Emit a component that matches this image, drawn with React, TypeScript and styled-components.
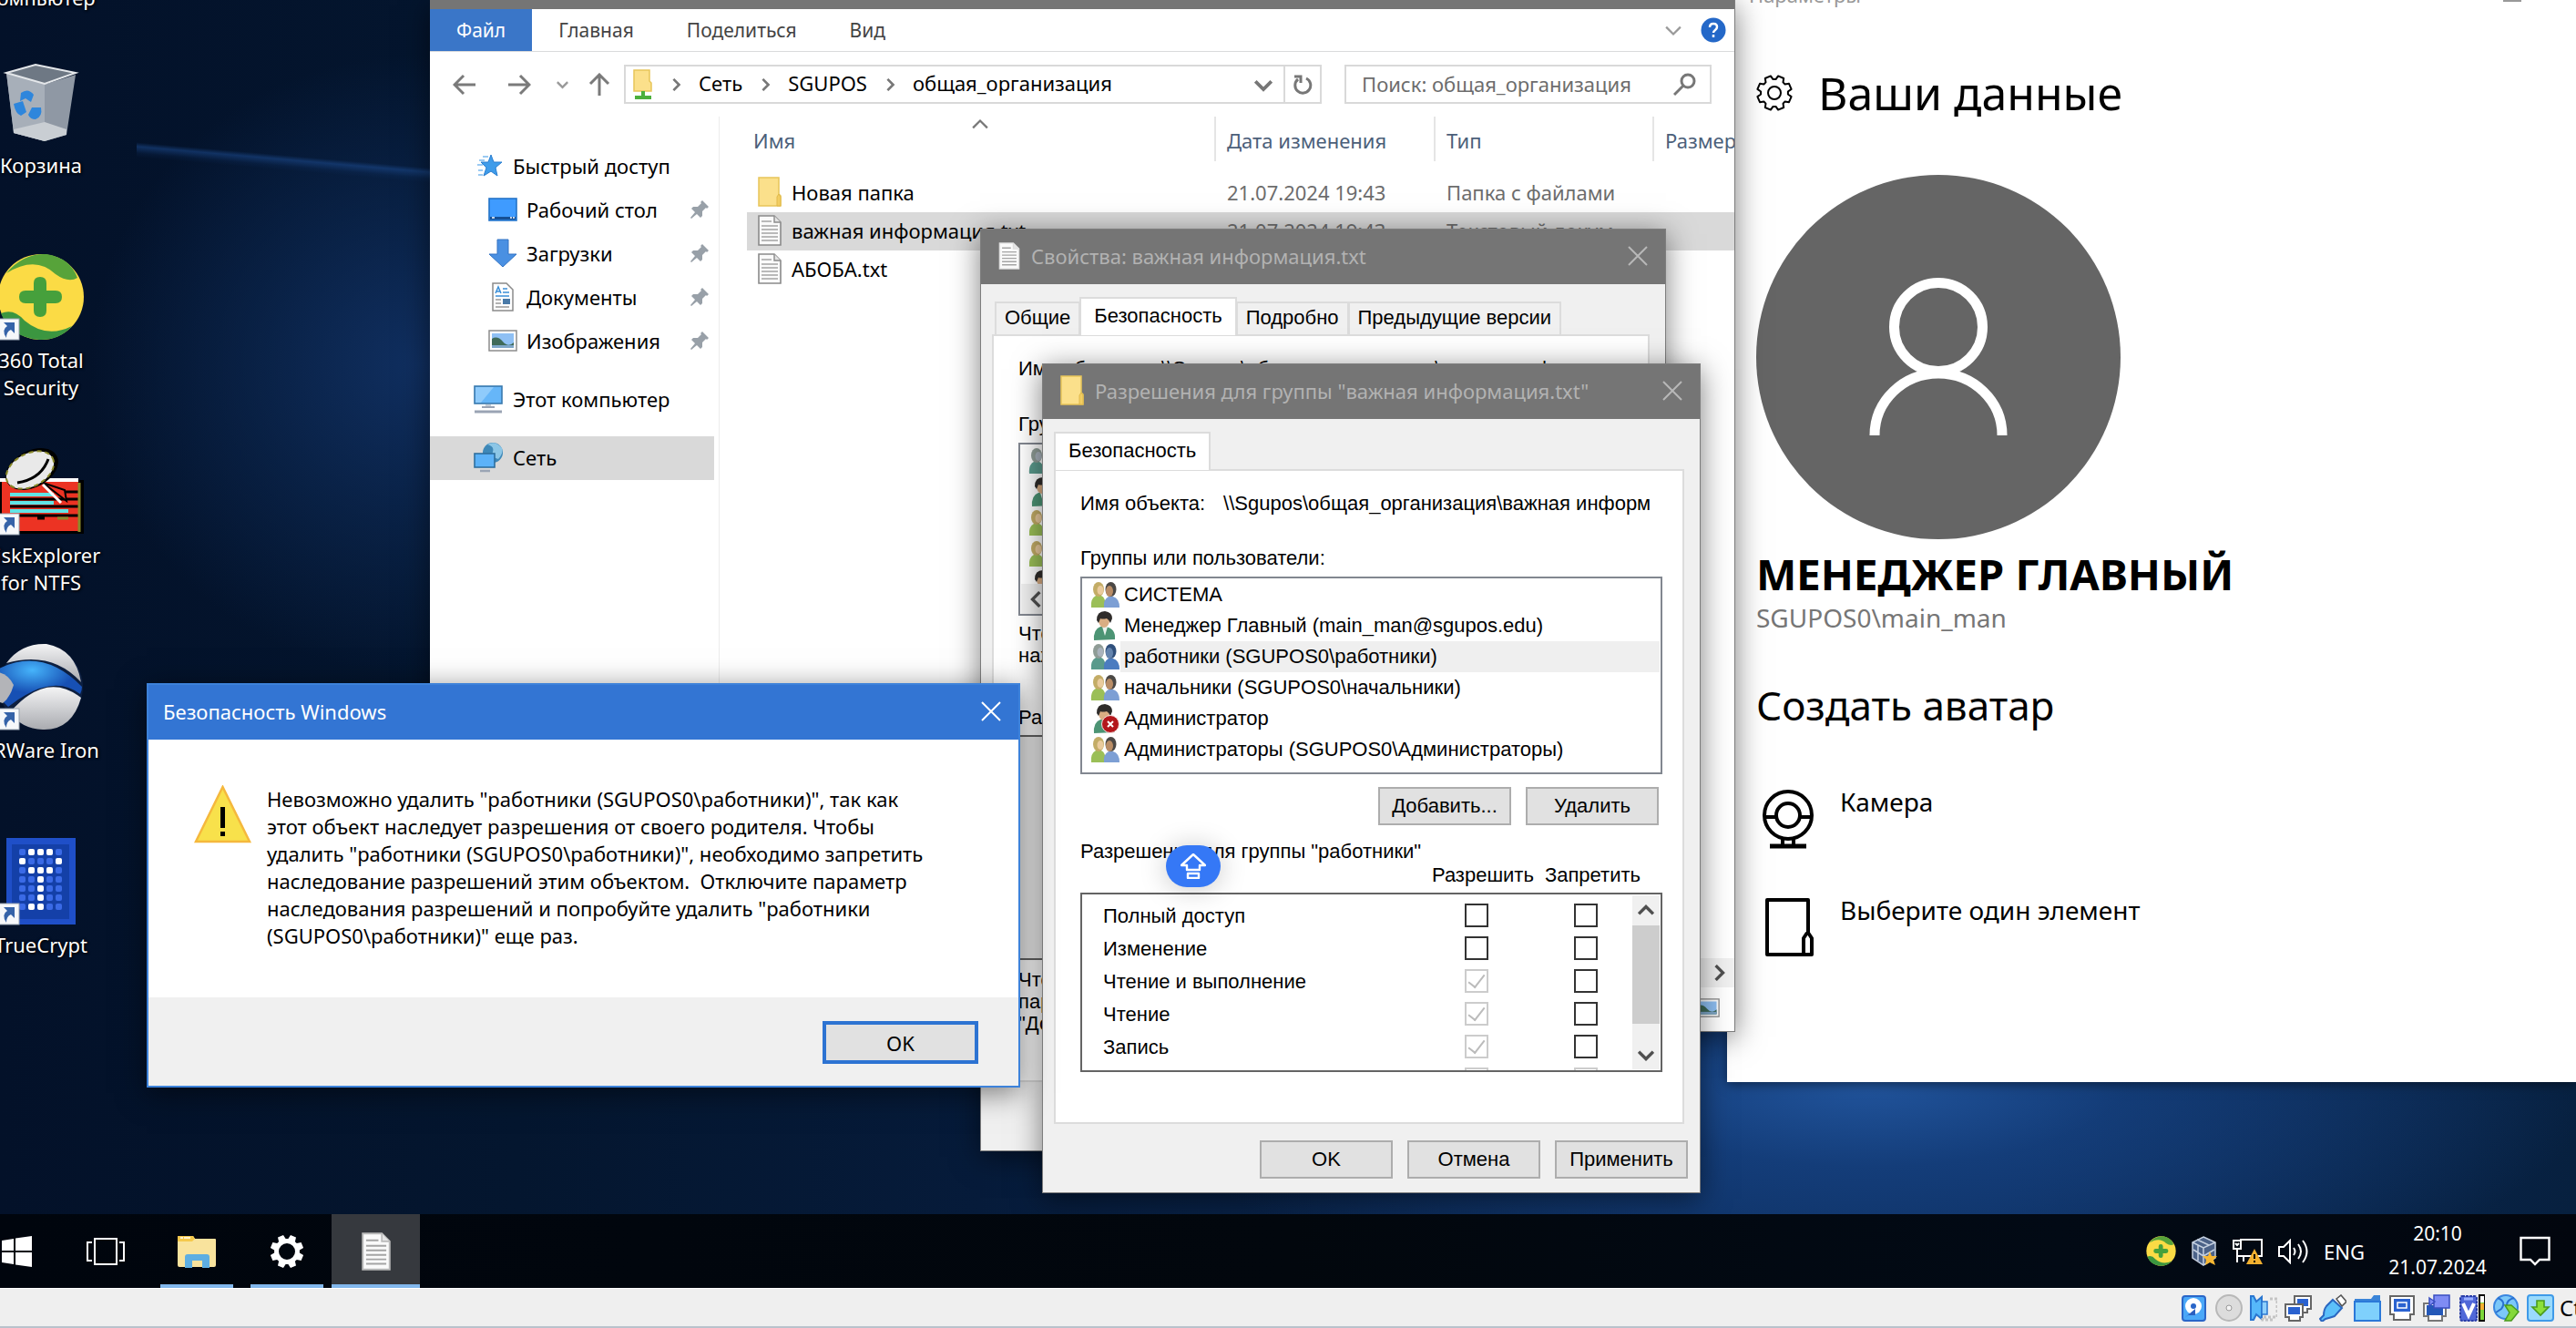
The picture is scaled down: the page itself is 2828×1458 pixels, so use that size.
import React from "react";
import styled, { createGlobalStyle, css } from "styled-components";

const ui = `"Noto Sans", "Open Sans", sans-serif`;
const dlg = `"Liberation Sans", Arial, sans-serif`;

const GlobalStyle = createGlobalStyle`
  * { box-sizing: border-box; }
  body { margin: 0; background: #efefef; font-family: ${ui}; font-size: 22px; color: #000; }
  button, input { font: inherit; color: inherit; }
  h1, h2, p, ul { margin: 0; padding: 0; font: inherit; }
  ul { list-style: none; }
  svg { display: block; flex: none; }
`;

/* ---------- shell ---------- */

const Screen = styled.div`
  display: flex;
  flex-direction: column;
  height: 100vh;
  overflow: hidden;
`;

const Desktop = styled.main`
  position: relative;
  flex: 1;
  overflow: hidden;
  background:
    linear-gradient(185deg, transparent 46%, rgba(28, 74, 142, 0.55) 50%, rgba(20, 60, 120, 0.15) 56%, transparent 60%) 150px 130px / 322px 90px no-repeat,
    radial-gradient(ellipse 800px 260px at 2050px 1190px, #21549c 0%, rgba(24, 70, 138, 0.65) 35%, transparent 100%),
    radial-gradient(ellipse 360px 340px at 460px 400px, #102f60 0%, rgba(13, 42, 86, 0.6) 50%, transparent 100%),
    linear-gradient(90deg, #031129 0%, #04162f 20%, #061b3a 38%, #0c2c5a 66%, #0c2c5a 78%, #07203f 100%);
`;

const IconColumn = styled.ul`
  position: absolute;
  left: -30px;
  top: -150px;
  width: 150px;
`;

const Shortcut = styled.li`
  height: 214px;
  display: flex;
  flex-direction: column;
  align-items: center;
  gap: 6px;
  color: #fff;
  line-height: 30px;
  text-align: center;
  white-space: pre;
  text-shadow: 1px 1px 3px #000, 0 0 3px #000;
`;

/* ---------- windows ---------- */

const Window = styled.section<{ $x: number; $y: number; $w: number; $active?: boolean }>`
  position: absolute;
  left: ${(p) => p.$x}px;
  top: ${(p) => p.$y}px;
  width: ${(p) => p.$w}px;
  border: ${(p) => (p.$active ? "2px solid #3d82da" : "1px solid #7d7d7d")};
  background: #f0f0f0;
  box-shadow: 0 6px 30px rgba(0, 0, 0, 0.5);
`;

const TitleBar = styled.header<{ $active?: boolean }>`
  display: flex;
  align-items: center;
  height: 60px;
  padding: 0 18px 2px ${(p) => (p.$active ? 16 : 19)}px;
  gap: 12px;
  background: ${(p) => (p.$active ? "#3375d3" : "#757575")};
  color: ${(p) => (p.$active ? "#fff" : "#b2b2b2")};
`;

const Title = styled.h2`
  flex: 1;
  white-space: nowrap;
`;

const IconButton = styled.button<{ $w?: number; $h?: number }>`
  display: flex;
  align-items: center;
  justify-content: center;
  width: ${(p) => p.$w ?? 24}px;
  height: ${(p) => p.$h ?? 24}px;
  padding: 0;
  border: 0;
  background: none;
`;

const PushButton = styled.button<{ $primary?: boolean }>`
  width: ${(p) => (p.$primary ? 171 : 146)}px;
  height: ${(p) => (p.$primary ? 47 : 42)}px;
  padding: 0;
  border: ${(p) => (p.$primary ? "4px solid #2d73d2" : "2px solid #adadad")};
  background: #e1e1e1;
`;

/* ---------- explorer ---------- */

const Explorer = styled(Window)`
  height: 1133px;
  display: flex;
  flex-direction: column;
  border-top: 0;
  border-left: 0;
  background: #fff;
  overflow: hidden;
`;

const Caption = styled.div`
  height: 10px;
  background: #757575;
`;

const Ribbon = styled.nav`
  display: flex;
  align-items: center;
  height: 47px;
  border-bottom: 1px solid #dadbdc;
  padding-right: 8px;
  font-size: 21px;
`;

const RibbonTab = styled.button<{ $file?: boolean }>`
  height: 46px;
  padding: 0 29px;
  border: 0;
  background: ${(p) => (p.$file ? "#3a76c8" : "none")};
  color: ${(p) => (p.$file ? "#fff" : "#444")};
`;

const Spacer = styled.span`
  flex: 1;
`;

const NavRow = styled.div`
  display: flex;
  align-items: center;
  padding: 14px 25px 14px 8px;
`;

const AddressBar = styled.div`
  flex: 1;
  display: flex;
  align-items: center;
  height: 43px;
  margin: 0 25px 0 3px;
  border: 2px solid #d9d9d9;
  padding-left: 8px;
  gap: 18px;
`;

const Crumb = styled.button`
  border: 0;
  padding: 0 0 4px;
  background: none;
`;

const RefreshCell = styled.div`
  border-left: 2px solid #d9d9d9;
  height: 39px;
  display: flex;
  align-items: center;
  margin-left: -8px;
`;

const SearchBox = styled.label`
  display: flex;
  align-items: center;
  width: 403px;
  height: 43px;
  border: 2px solid #d9d9d9;
  padding: 0 14px 0 17px;
  gap: 8px;
`;

const SearchInput = styled.input`
  flex: 1;
  min-width: 0;
  border: 0;
  padding: 0 0 2px;
  outline: 0;
  background: none;
  &::placeholder { color: #6d6d6d; opacity: 1; }
`;

const Split = styled.div`
  flex: 1;
  display: grid;
  grid-template-columns: 318px 1fr;
  min-height: 0;
`;

const Sidebar = styled.nav`
  border-right: 1px solid #ececec;
  padding: 31px 5px 0 0;
  display: flex;
  flex-direction: column;
  gap: 16px;
`;

const SideItem = styled.a<{ $child?: boolean; $current?: boolean }>`
  display: flex;
  align-items: center;
  height: 48px;
  padding: 0 5px 2px ${(p) => (p.$child ? 64 : 48)}px;
  gap: ${(p) => (p.$child ? 10 : 11)}px;
  color: #000;
  text-decoration: none;
  white-space: nowrap;
  background: ${(p) => (p.$current ? "#d9d9d9" : "none")};
`;

const Listing = styled.div`
  padding-left: 30px;
  overflow: hidden;
`;

const FileTable = styled.table`
  width: 100%;
  table-layout: fixed;
  border-collapse: collapse;
  white-space: nowrap;
  td, th { padding: 0; text-align: left; font-weight: normal; }
  td { height: 42px; padding: 0 0 2px 14px; color: #6d6d6d; overflow: hidden; }
`;

const HeadCell = styled.div<{ $first?: boolean }>`
  position: relative;
  display: flex;
  align-items: center;
  height: 49px;
  margin-bottom: 14px;
  padding: 2px 0 0 ${(p) => (p.$first ? 7 : 12)}px;
  border-left: ${(p) => (p.$first ? "0" : "2px solid #e5e5e5")};
  color: #4c607a;
  svg { position: absolute; left: 247px; top: 0; }
`;

const FileRow = styled.tr<{ $selected?: boolean }>`
  background: ${(p) => (p.$selected ? "#d9d9d9" : "none")};
`;

const FileName = styled.div`
  display: flex;
  align-items: center;
  gap: 11px;
  margin-left: -2px;
  color: #000;
`;

const ScrollTrack = styled.div`
  display: flex;
  justify-content: flex-end;
  height: 32px;
  background: #f0f0f0;
  padding-right: 1px;
`;

const StatusRow = styled.div`
  display: flex;
  align-items: center;
  justify-content: flex-end;
  height: 48px;
  padding: 0 16px 4px 0;
`;

/* ---------- property dialogs ---------- */

const DialogBody = styled.div`
  padding: 14px 13px 15px 12px;
  font-family: ${dlg};
  font-size: 22px;
  line-height: 24px;
`;

const Tabs = styled.div<{ $inset?: boolean }>`
  display: flex;
  align-items: flex-end;
  height: 41px;
  padding-left: ${(p) => (p.$inset ? 3 : 0)}px;
`;

const Tab = styled.button<{ $active?: boolean }>`
  height: ${(p) => (p.$active ? 42 : 36)}px;
  margin-bottom: ${(p) => (p.$active ? -1 : 0)}px;
  padding: 0 ${(p) => (p.$active ? 14 : 9)}px 2px;
  border: 2px solid #dcdcdc;
  border-bottom: 0;
  margin-right: -1px;
  position: relative;
  z-index: ${(p) => (p.$active ? 1 : 0)};
  background: ${(p) => (p.$active ? "#fff" : "#f0f0f0")};
  white-space: nowrap;
`;

const Panel = styled.div<{ $end: number }>`
  margin-right: 4px;
  padding: 24px 22px ${(p) => p.$end}px 27px;
  border: 2px solid #dcdcdc;
  background: #fff;
`;

const ObjectName = styled.div`
  display: flex;
  gap: 20px;
  white-space: nowrap;
  overflow: hidden;
`;

const Label = styled.p<{ $top: number }>`
  margin-top: ${(p) => p.$top}px;
  white-space: pre;
`;

const Principals = styled.ul<{ $h: number }>`
  height: ${(p) => p.$h}px;
  margin-top: 8px;
  padding: 1px 1px 0;
  border: 2px solid #828790;
  background: #fff;
  display: flex;
  flex-direction: column;
  overflow: hidden;
`;

const Principal = styled.li<{ $selected?: boolean }>`
  display: flex;
  align-items: center;
  flex: none;
  height: 34px;
  padding-left: 8px;
  gap: 1px;
  span {
    flex: 1;
    padding-left: 4px;
    line-height: 34px;
    white-space: nowrap;
    background: ${(p) => (p.$selected ? "#efefef" : "none")};
  }
`;

const BottomScroll = styled.li`
  position: relative;
  flex: none;
  height: 33px;
  margin-top: -18px;
  display: flex;
  align-items: center;
  background: #f0f0f0;
`;

const Buttons = styled.div<{ $top: number; $end?: number }>`
  display: flex;
  justify-content: flex-end;
  gap: 16px;
  margin: ${(p) => p.$top}px ${(p) => p.$end ?? 0}px 0 0;
`;

const RightsHead = styled.div`
  display: flex;
  justify-content: flex-end;
  gap: 12px;
  padding-right: 24px;
  margin-top: 2px;
`;

const RightsBox = styled.div<{ $h: number; $disabled?: boolean }>`
  display: flex;
  height: ${(p) => p.$h}px;
  margin-top: 7px;
  border: 2px solid #646464;
  background: ${(p) => (p.$disabled ? "#f0f0f0" : "#fff")};
  overflow: hidden;
`;

const RightsTable = styled.table`
  flex: 1;
  align-self: flex-start;
  margin-top: 5px;
  table-layout: fixed;
  border-collapse: collapse;
  td, th { height: 36px; padding: 0; text-align: left; font-weight: normal; }
  th { padding: 1px 0 0 23px; }
`;

const Check = styled.input`
  appearance: none;
  display: block;
  width: 26px;
  height: 26px;
  margin: 5px 0;
  border: 2px solid #333;
  background: #fff;
  &:disabled { border-color: #ccc; }
  &:checked::after {
    content: "";
    display: block;
    width: 8px;
    height: 16px;
    margin: 0 auto;
    border: solid #bbb;
    border-width: 0 2px 2px 0;
    transform: rotate(38deg);
  }
`;

const VScroll = styled.div`
  width: 30px;
  margin: 1px;
  display: flex;
  flex-direction: column;
  background: #f0f0f0;
`;

const Thumb = styled.div`
  height: 108px;
  background: #cdcdcd;
`;

const KeyHint = styled.div`
  position: absolute;
  left: 1280px;
  top: 928px;
  width: 60px;
  height: 46px;
  border-radius: 23px;
  display: flex;
  align-items: center;
  justify-content: center;
  background: #3578f6;
  box-shadow: 0 2px 30px rgba(0, 0, 0, 0.22);
`;

/* ---------- message ---------- */

const MessageBody = styled.div`
  display: flex;
  align-items: flex-start;
  gap: 17px;
  padding: 50px 40px 53px 50px;
  background: #fff;
  line-height: 30px;
  white-space: pre;
`;

const MessageFooter = styled.footer`
  display: flex;
  justify-content: flex-end;
  padding: 26px 44px 24px;
`;

/* ---------- settings ---------- */

const Settings = styled.section`
  position: absolute;
  left: 1896px;
  right: 0;
  top: -26px;
  padding: 0 32px 84px;
  background: #fff;
  box-shadow: 0 2px 12px rgba(0, 0, 0, 0.5);
`;

const SettingsTitle = styled.header`
  display: flex;
  justify-content: space-between;
  align-items: center;
  margin: 0 28px 0 -8px;
  height: 40px;
  color: #999;
  svg { margin-top: -4px; }
`;

const PageHead = styled.h1`
  display: flex;
  align-items: center;
  gap: 28px;
  margin-top: 48px;
  height: 80px;
  font-size: 50px;
  white-space: nowrap;
`;

const Avatar = styled.div`
  display: flex;
  justify-content: center;
  width: 400px;
  height: 400px;
  margin-top: 50px;
  padding-top: 110px;
  border-radius: 50%;
  background: #656565;
`;

const UserName = styled.p`
  margin-top: 6px;
  font-size: 47px;
  line-height: 64px;
  font-weight: 700;
  white-space: nowrap;
`;

const Account = styled.p`
  font-size: 28px;
  line-height: 32px;
  color: #767676;
`;

const SubHead = styled.h2`
  margin-top: 48px;
  font-size: 44px;
  line-height: 64px;
`;

const Source = styled.button`
  display: flex;
  align-items: flex-start;
  gap: 28px;
  width: 100%;
  height: 119px;
  padding: 0 0 0 6px;
  border: 0;
  background: none;
  font-size: 28px;
  line-height: 28px;
  text-align: left;
`;

const Sources = styled.div`
  margin-top: 60px;
`;

/* ---------- taskbar ---------- */

const Taskbar = styled.footer`
  display: flex;
  height: 81px;
  flex: none;
  background: linear-gradient(90deg, #00050d, #02070d 50%, #020a15 80%, #02060e);
  color: #fff;
`;

const TaskButton = styled.button<{ $w: number; $active?: boolean; $line?: number; $start?: boolean }>`
  display: flex;
  align-items: center;
  justify-content: ${(p) => (p.$start ? "flex-start" : "center")};
  width: ${(p) => p.$w}px;
  padding: 0 0 0 ${(p) => (p.$start ? 2 : 0)}px;
  border: 0;
  background: ${(p) => (p.$active ? "#36393e" : "none")};
  ${(p) =>
    p.$line &&
    css`
      background-image: linear-gradient(#82b7ec, #82b7ec);
      background-size: ${p.$line}px 4px;
      background-position: center bottom;
      background-repeat: no-repeat;
    `}
`;

const Tray = styled.div`
  margin-left: auto;
  display: flex;
  align-items: center;
  padding-right: 28px;
`;

const TrayGroup = styled.div`
  display: flex;
  align-items: center;
  gap: 16px;
`;

const Clock = styled.time`
  width: 120px;
  margin: 0 30px 0 20px;
  padding-bottom: 2px;
  font-size: 21px;
  line-height: 37px;
  text-align: center;
`;

const HostBar = styled.div`
  display: flex;
  align-items: center;
  justify-content: flex-end;
  gap: 8px;
  height: 44px;
  flex: none;
  border-top: 1px solid #fff;
  border-bottom: 2px solid #b9c2cc;
  background: #efefef;
  overflow: hidden;
`;

const HostKey = styled.span`
  width: 18px;
  margin-left: -2px;
  font-size: 24px;
  white-space: nowrap;
  overflow: hidden;
`;

/* ---------- icons ---------- */

const Close = ({ c = "#b8b8b8" }: { c?: string }) => (
  <svg width="22" height="22" viewBox="0 0 22 22" stroke={c} strokeWidth="2" fill="none">
    <path d="M1 1l20 20M21 1L1 21" />
  </svg>
);

const Chevron = ({ d, w = 14, c = "#777", s = 3 }: { d: "up" | "down" | "left" | "right"; w?: number; c?: string; s?: number }) => {
  const p = { up: "M1 11l7-7 7 7", down: "M1 5l7 7 7-7", left: "M11 1L4 8l7 7", right: "M5 1l7 7-7 7" }[d];
  return (
    <svg width={w} height={w} viewBox="0 0 16 16" fill="none" stroke={c} strokeWidth={s}>
      <path d={p} />
    </svg>
  );
};

const Arrow = ({ r = 0 }: { r?: number }) => (
  <svg width="26" height="26" viewBox="0 0 26 26" fill="none" stroke="#7a7a7a" strokeWidth="3">
    <path transform={`rotate(${r} 13 13)`} d="M25 13H3M12 3L2 13l10 10" />
  </svg>
);

const Folder = () => (
  <svg width="26" height="34" viewBox="0 0 26 34">
    <path d="M1 1h22v18l2 2v11H1z" fill="#fbe08b" stroke="#e8c55a" strokeWidth="1.5" />
    <path d="M21 32V22l2-3 2 3v10z" fill="#f2cd62" stroke="#e0b94a" />
  </svg>
);

const TaskFolder = () => (
  <svg width="44" height="36" viewBox="0 0 44 36">
    <path d="M1 2q0-1 1-1h16l2 3h22q1 0 1 1v28q0 2-2 2H3q-2 0-2-2z" fill="#f9e39d" />
    <path d="M1 2q0-1 1-1h16l2 3-3 3H1z" fill="#f5c94c" />
    <path d="M4 3h3M8 3h7" stroke="#fff3cf" strokeWidth="2" />
    <path d="M9 36V24q0-3 3-3h21q3 0 3 3v12h-8v-8H17v8z" fill="#5eaee2" />
  </svg>
);

const NetFolder = () => (
  <svg width="22" height="34" viewBox="0 0 22 34">
    <path d="M1 1h17v12l2 2v9H1z" fill="#fbe08b" stroke="#e8c55a" strokeWidth="1.5" />
    <path d="M9 24h4v5h7v4H2v-4h7z" fill="#4caf3c" />
  </svg>
);

const Doc = ({ w = 26, h = 34, line = "#8a8a8a" }: { w?: number; h?: number; line?: string }) => (
  <svg width={w} height={h} viewBox="0 0 26 34">
    <path d="M1 1h17l7 7v25H1z" fill="#fafafa" stroke={line} strokeWidth="1.6" />
    <path d="M18 1v7h7" fill="#e4e4e4" stroke={line} strokeWidth="1.4" />
    <path d="M4 7h11M4 12h18M4 16h18M4 20h18M4 24h18M4 28h18" stroke="#a4a4a4" strokeWidth="1.6" />
  </svg>
);

const Pin = () => (
  <svg width="22" height="22" viewBox="0 0 22 22" fill="#98a0a8">
    <path d="M14 1l7 7-2 2-1-1-4 4 0 5-2 2-4-4-6 5-1-1 5-6-4-4 2-2 5 0 4-4-1-1z" />
  </svg>
);

const Star = () => (
  <svg width="32" height="26" viewBox="0 0 32 26">
    <path d="M19 1l3 8 9 0-7 6 2 9-7-5-8 5 3-9-6-6 8 0z" fill="#3f9cea" stroke="#2a7ed0" />
    <path d="M6 7h6M4 12h6M5 18h5M10 3h6M5 23h5" stroke="#79b9ee" strokeWidth="1.6" />
  </svg>
);

const DesktopGlyph = () => (
  <svg width="32" height="26" viewBox="0 0 32 26">
    <rect x="1" y="1" width="30" height="24" fill="#3f9bff" stroke="#2373c8" strokeWidth="1.6" />
    <path d="M2 22.500h28" stroke="#164f94" strokeWidth="3" />
    <path d="M4 22h3M24 22h2M27 22h2" stroke="#fff" strokeWidth="1.500" />
  </svg>
);

const DownArrow = () => (
  <svg width="32" height="32" viewBox="0 0 32 32">
    <path d="M10 1h12v16h9L16 31 1 17h9z" fill="#4a90e2" stroke="#3273c4" />
  </svg>
);

const TextDoc = () => (
  <svg width="32" height="32" viewBox="0 0 32 32">
    <path d="M5 1h15l7 7v23H5z" fill="#fff" stroke="#8a8a8a" strokeWidth="1.5" />
    <path d="M8 12l3-7 3 7M9 10h4M16 7h5M16 11h7M8 15h15" stroke="#3b8fd8" strokeWidth="1.5" fill="none" />
    <path d="M8 19h6M8 23h6M8 27h15" stroke="#999" strokeWidth="1.4" />
    <rect x="16" y="18" width="8" height="6" fill="#4a7aa8" />
  </svg>
);

const Picture = ({ w = 32 }: { w?: number }) => (
  <svg width={w} height={(w * 24) / 32} viewBox="0 0 32 24">
    <rect x="1" y="1" width="30" height="22" fill="#fff" stroke="#8c8c8c" strokeWidth="1.5" />
    <rect x="4" y="4" width="24" height="16" fill="#8fc0f4" />
    <path d="M4 10q6-4 12 3t12 1v6H4z" fill="#3f6a58" />
    <path d="M4 17h24v3H4z" fill="#7ea6c8" />
  </svg>
);

const Monitor = () => (
  <svg width="32" height="32" viewBox="0 0 32 32">
    <rect x="1" y="2" width="30" height="19" fill="#66b6f8" stroke="#3a7aae" strokeWidth="1.6" />
    <path d="M2 3h20L8 20H2z" fill="#8fcbfb" />
    <path d="M9 25h14" stroke="#9aa4b4" strokeWidth="2" />
    <path d="M1 30h30" stroke="#9aa4b4" strokeWidth="3" />
    <path d="M13 22h6v2h-6z" fill="#c4ccd6" />
  </svg>
);

const Network = () => (
  <svg width="32" height="34" viewBox="0 0 32 34">
    <circle cx="21" cy="12" r="11" fill="#3e88b8" />
    <path d="M15 3q8 2 6 8t6 8q6-7 4-12Q24-2 15 3z" fill="#8cc6e6" />
    <rect x="1" y="13" width="22" height="15" fill="#5cb2f8" stroke="#2f6f9e" strokeWidth="1.6" />
    <path d="M7 32h11" stroke="#9aa4b4" strokeWidth="2.500" />
  </svg>
);

const Group = ({ sel }: { sel?: boolean }) => (
  <svg width="32" height="30" viewBox="0 0 32 30">
    <path d="M1 29q-1-10 5-13h6q5 2 5 13z" fill={sel ? "#5a9a8c" : "#9bbf57"} />
    <ellipse cx="9" cy="9" rx="6" ry="8" fill={sel ? "#8f9c96" : "#c3ac66"} />
    <ellipse cx="11" cy="10" rx="3.500" ry="5" fill={sel ? "#aab3bd" : "#eacb9d"} />
    <path d="M15 29q-1-9 5-12h5q7 2 7 12z" fill={sel ? "#4b7cc0" : "#7d9fd4"} />
    <ellipse cx="22.500" cy="9" rx="6" ry="8" fill={sel ? "#30507c" : "#4b4845"} />
    <ellipse cx="21" cy="11" rx="4" ry="6" fill={sel ? "#6484ae" : "#b98d66"} />
  </svg>
);

const Person = ({ denied }: { denied?: boolean }) => (
  <svg width="32" height="33" viewBox="0 0 32 33">
    <path d="M4 32q-1-12 7-15h6q11 2 10 14z" fill="#4c9474" />
    <path d="M13 17l3 10 3-10z" fill="#e9f2ee" />
    <ellipse cx="15" cy="10" rx="6" ry="8" fill="#d9ad83" />
    <path d="M7 10q0-10 9-10 8 1 8 8l-2 5q-1-3-4-5-5 1-7 0l-2 5z" fill="#2f2c2a" />
    {denied && (
      <>
        <circle cx="22" cy="22" r="9.500" fill="#b3161b" stroke="#f4dcdc" />
        <path d="M19 19l6 6M25 19l-6 6" stroke="#fff" strokeWidth="2" />
      </>
    )}
  </svg>
);

const gearPath = (cx: number, cy: number, ro: number, ri: number, n = 8) => {
  const pts: string[] = [];
  for (let i = 0; i < n; i++) {
    const a = (i * 2 * Math.PI) / n + Math.PI / n;
    const w = Math.PI / n;
    [[-0.75, ri], [-0.45, ro], [0.45, ro], [0.75, ri]].forEach(([k, r]) =>
      pts.push(`${(cx + r * Math.cos(a + k * w)).toFixed(1)} ${(cy + r * Math.sin(a + k * w)).toFixed(1)}`)
    );
  }
  return `M${pts.join("L")}Z`;
};

const GearLine = () => (
  <svg width="40" height="40" viewBox="0 0 40 40" fill="none" stroke="#000" strokeWidth="2" strokeLinejoin="round">
    <path d={gearPath(20, 20, 19, 15)} />
    <circle cx="20" cy="20" r="7" />
  </svg>
);

const GearSolid = () => (
  <svg width="38" height="38" viewBox="0 0 38 38">
    <path fillRule="evenodd" d={gearPath(19, 19, 18.5, 14) + "M10 19a9 9 0 1 0 18 0a9 9 0 1 0-18 0z"} fill="#fff" />
  </svg>
);

const Badge = () => (
  <>
    <rect x="-6" y="72" width="30" height="23" fill="#f6f8fa" stroke="#9aa6b4" />
    <path d="M7 76h12v12l-4-4q-5 2-5 9-6-9 1-13z" fill="#3563a8" />
  </>
);

const Total360 = ({ s, badge }: { s: number; badge?: boolean }) => (
  <svg width={s} height={s} viewBox="0 0 96 96" overflow="visible">
    <circle cx="48" cy="48" r="47" fill="#fbdb45" />
    <path d="M10 22Q28 0 54 1q26 4 34 26-10 6-24-4Q42 2 10 22z" fill="#57a33a" />
    <path d="M4 66q14-6 26 8 24 20 52 6-14 16-36 15Q14 92 4 66z" fill="#3b9640" />
    <path d="M40 33q0-7 7-7t7 7v8h10q7 0 7 7t-7 7H54v8q0 7-7 7t-7-7v-8H31q-7 0-7-7t7-7h9z" fill="#46a03c" />
    {badge && <Badge />}
  </svg>
);

const Bin = () => (
  <svg width="96" height="96" viewBox="0 0 96 96">
    <path d="M10 16l44 12 32-10-10 66-24 7-34-9z" fill="#8f98a4" />
    <path d="M10 16l42 12v63l-34-9z" fill="#a7afb9" />
    <path d="M18 78l34-8 24 8v6l-24 7-34-9z" fill="#c9ced3" />
    <path d="M10 16l32-9 44 9-34 12z" fill="#6e7884" stroke="#e4e7ea" strokeWidth="2" />
    <path d="M26 38q8-6 14 2l-3 8-6-4-6 3zM18 50l10-3 4 12-6 4q-6-2-8-13zM34 62l4-8 10 0q2 10-6 13-6 0-8-5z" fill="#2e86dc" />
  </svg>
);

const DiskExplorer = () => (
  <svg width="96" height="96" viewBox="0 0 96 96" overflow="visible">
    <path d="M3 35h92v59H3z" fill="#000" />
    <path d="M5 37h84v54H5z" fill="#ec3323" />
    <path d="M-3 33h92v4H-3z" fill="#fff" />
    <path d="M14 51h48M14 60h48M14 69h64" stroke="#61e4e6" strokeWidth="4" />
    <path d="M14 56h76M14 64h76M14 74h76M44 77h8M74 48h16" stroke="#000" strokeWidth="3" />
    <path d="M66 77h12M90 38v54" stroke="#8a8a2a" strokeWidth="3" />
    <ellipse cx="38" cy="23" rx="31" ry="20" transform="rotate(-28 38 23)" fill="#000" />
    <ellipse cx="36" cy="24" rx="28" ry="18" transform="rotate(-28 36 24)" fill="#e9e9e9" stroke="#8a8a2a" strokeDasharray="5 4" strokeWidth="2" />
    <path d="M22 38q26-4 34-26" stroke="#000" strokeWidth="3" fill="none" />
    <path d="M50 38l26 20-2-12z" fill="#ec3323" stroke="#000" strokeWidth="2" />
    <path d="M50 40l20 20" stroke="#fff" strokeWidth="3" />
    <Badge />
  </svg>
);

const Iron = () => (
  <svg width="96" height="96" viewBox="0 0 96 96" overflow="visible">
    <defs>
      <linearGradient id="ir" x1="0" x2="0" y1="0" y2="1">
        <stop offset="0" stopColor="#f4f4f5" /><stop offset="1" stopColor="#a9abb0" />
      </linearGradient>
      <radialGradient id="ib" cx=".4" cy=".2"><stop offset="0" stopColor="#46b4fb" /><stop offset="1" stopColor="#1750b4" /></radialGradient>
    </defs>
    <circle cx="48" cy="48" r="46" fill="#0d1f40" />
    <path d="M10 22Q26 0 54 1q32 6 38 42Q60 8 10 22z" fill="url(#ir)" />
    <path d="M2 28Q50 4 93 48q0 4-2 8Q60 32 12 70L2 60z" fill="url(#ib)" />
    <path d="M-6 32q16-2 24 14Q14 60 6 66l-12-4z" fill="#b3b4b8" />
    <path d="M14 76Q54 30 92 60 82 96 50 95 26 94 14 76z" fill="url(#ir)" />
    <Badge />
  </svg>
);

const TrueCrypt = () => {
  const lit = ["01110", "10001", "01110", "00100", "00100", "00100", "01100"];
  return (
    <svg width="96" height="96" viewBox="0 0 96 96" overflow="visible">
      <rect x="10" y="0" width="76" height="95" fill="#1f4fc8" />
      <rect x="16" y="7" width="63" height="82" fill="#1440a8" />
      {lit.map((row, y) =>
        row.split("").map((b, x) => (
          <rect key={`${x}-${y}`} x={24 + x * 10} y={12 + y * 10} width="7" height="7" rx="2" fill={b === "1" ? "#fff" : "#3a6ae6"} />
        ))
      )}
      <Badge />
    </svg>
  );
};

const Warning = () => (
  <svg width="63" height="64" viewBox="0 0 63 64">
    <path d="M31.500 2L61 62H2z" fill="#f8e14b" stroke="#f5b83d" strokeWidth="2.500" />
    <path d="M31.500 24v23M31.500 51v5" stroke="#000" strokeWidth="5" />
  </svg>
);

const hostIcons: React.ReactNode[] = [
  <><rect x="2" y="2" width="25" height="27" rx="3" fill="#4aa8f8" stroke="#2a66c8" strokeWidth="2" /><circle cx="14" cy="13" r="9" fill="#fff" /><circle cx="14" cy="13" r="3" fill="#2a66c8" /><path d="M4 26l12-10v7H8z" fill="#2a5fc0" /></>,
  <><circle cx="15" cy="15" r="14" fill="#dcdcdc" stroke="#b8b8b8" strokeWidth="2" /><circle cx="15" cy="15" r="3" fill="#f4f4f4" stroke="#999" /></>,
  <><path d="M1 2h3l3 6 6-5v24l-6-5-3 6H1z" fill="#56b8fa" stroke="#2a76d0" strokeWidth="2" /><rect x="13" y="8" width="6" height="14" fill="#8fd0fc" stroke="#2a76d0" strokeWidth="1.500" /><path d="M22 5h8v20H14v3h12" fill="none" stroke="#c4c4c4" strokeWidth="3" strokeDasharray="3 2" /></>,
  <><path d="M11 2h18v14h-4v4H11z" fill="#fff" stroke="#666" strokeWidth="2" /><rect x="14" y="5" width="12" height="8" fill="#2a62d0" /><path d="M1 11h19v14h-3v4H5v-4H1z" fill="#fff" stroke="#666" strokeWidth="2" /><rect x="4" y="14" width="13" height="8" fill="#2a62d0" /></>,
  <><path d="M19 5l5-4 6 7-5 5z" fill="#fff" stroke="#555" strokeWidth="1.600" /><path d="M15 6l10 9-8 9q-6 2-10 3l-4 3-2-3 4-4q0-6 3-10z" fill="#5cc0fa" stroke="#2a66c0" strokeWidth="2" /></>,
  <><path d="M1 5h18l3-4h7v28H1z" fill="#3a84d8" /><path d="M1 8h28v21H1z" fill="#7fd0fc" stroke="#2a78d8" strokeWidth="2" /></>,
  <><path d="M2 2h26v20h-4v6H6v-6H2z" fill="#fff" stroke="#666" strokeWidth="2" /><rect x="6" y="5" width="18" height="14" fill="#2a62d0" /><rect x="10" y="9" width="10" height="6" fill="none" stroke="#fff" strokeWidth="1.500" /></>,
  <><path d="M1 10h24v14h-4v5H6v-5H1z" fill="#fff" stroke="#777" strokeWidth="2" /><rect x="4" y="12" width="18" height="11" fill="#2458b8" /><path d="M12 1h17v14H12zM7 4l6 4-6 5z" fill="#7f8cf4" stroke="#3a4ec0" strokeWidth="1.500" /></>,
  <><rect x="3" y="2" width="18" height="27" rx="2" fill="#5068d8" stroke="#2a3ea8" strokeWidth="2" strokeDasharray="3 1" /><path d="M6 10l6 13 6-13" fill="none" stroke="#fff" strokeWidth="4" /><path d="M7 5h10" stroke="#9ab0ff" strokeWidth="3" /><rect x="24" y="1" width="6" height="28" fill="#7cd63a" stroke="#000" strokeWidth="2" /><rect x="25" y="10" width="4" height="7" fill="#f4b030" /><rect x="25" y="2" width="4" height="7" fill="#fff" /></>,
  <><circle cx="15" cy="14" r="13" fill="#7cc8f8" stroke="#3a86e0" strokeWidth="2" /><path d="M6 4q10 4 4 12l-6 4M24 4q-8 2-8 8" fill="none" stroke="#2a70d0" strokeWidth="2" /><path d="M14 12h7l8 7-8 10h-7l5-9z" fill="#84d83a" stroke="#4a9a1e" strokeWidth="1.500" /></>,
  <><rect x="1" y="1" width="28" height="28" rx="3" fill="#9adafc" stroke="#3f9ae8" strokeWidth="2" /><path d="M11 7h8v7h5l-9 9-9-9h5z" fill="#8ce03a" stroke="#4a9a1e" strokeWidth="1.600" /></>,
];

/* ---------- data ---------- */

const quickLinks = [
  { name: "Рабочий стол", icon: <DesktopGlyph /> },
  { name: "Загрузки", icon: <DownArrow /> },
  { name: "Документы", icon: <TextDoc /> },
  { name: "Изображения", icon: <Picture /> },
];

const files = [
  { name: "Новая папка", date: "21.07.2024 19:43", type: "Папка с файлами", icon: <Folder /> },
  { name: "важная информация.txt", date: "21.07.2024 19:43", type: "Текстовый докум...", icon: <Doc />, selected: true },
  { name: "АБОБА.txt", date: "", type: "", icon: <Doc /> },
];

const principals = [
  { name: "СИСТЕМА", icon: <Group /> },
  { name: "Менеджер Главный (main_man@sgupos.edu)", icon: <Person /> },
  { name: "работники (SGUPOS0\\работники)", icon: <Group sel />, selected: true },
  { name: "начальники (SGUPOS0\\начальники)", icon: <Group /> },
  { name: "Администратор", icon: <Person denied /> },
  { name: "Администраторы (SGUPOS0\\Администраторы)", icon: <Group /> },
];

const rights = [
  { name: "Полный доступ", inherited: false },
  { name: "Изменение", inherited: false },
  { name: "Чтение и выполнение", inherited: true },
  { name: "Чтение", inherited: true },
  { name: "Запись", inherited: true },
];

const shortcuts = [
  { name: "Этот\nкомпьютер", icon: <svg width="96" height="96" /> },
  { name: "Корзина", icon: <Bin /> },
  { name: "360 Total\nSecurity", icon: <Total360 s={96} badge /> },
  { name: "DiskExplorer\nfor NTFS", icon: <DiskExplorer /> },
  { name: "SRWare Iron", icon: <Iron /> },
  { name: "TrueCrypt", icon: <TrueCrypt /> },
];

const message = `Невозможно удалить "работники (SGUPOS0\\работники)", так как
этот объект наследует разрешения от своего родителя. Чтобы
удалить "работники (SGUPOS0\\работники)", необходимо запретить
наследование разрешений этим объектом.  Отключите параметр
наследования разрешений и попробуйте удалить "работники
(SGUPOS0\\работники)" еще раз.`;

/* ---------- windows ---------- */

const SettingsWindow = () => (
  <Settings>
    <SettingsTitle>
      Параметры
      <svg width="20" height="20" viewBox="0 0 20 20" fill="none" stroke="#999" strokeWidth="2"><path d="M1 1h18v18H1z" /></svg>
    </SettingsTitle>
    <PageHead><GearLine />Ваши данные</PageHead>
    <Avatar>
      <svg width="152" height="178" viewBox="0 0 152 178" fill="none" stroke="#fff" strokeWidth="11">
        <circle cx="76" cy="57" r="48.500" />
        <path d="M6 176a70 68 0 0 1 140 0" />
      </svg>
    </Avatar>
    <UserName>МЕНЕДЖЕР ГЛАВНЫЙ</UserName>
    <Account>SGUPOS0\main_man</Account>
    <SubHead>Создать аватар</SubHead>
    <Sources>
      <Source>
        <svg width="58" height="66" viewBox="0 0 58 66" fill="none" stroke="#000" strokeWidth="4">
          <circle cx="29" cy="29" r="26" /><circle cx="29" cy="29" r="13" />
          <path d="M2 31h14M42 31h14M23 55v8M35 55v8" /><path d="M9 63h40" strokeWidth="5" />
        </svg>
        Камера
      </Source>
      <Source>
        <svg width="58" height="66" viewBox="0 0 58 66" fill="none" stroke="#000" strokeWidth="4" strokeLinejoin="round">
          <path d="M6 3h45v36l4 6v18H6z" /><path d="M46 63V45l4-6" />
        </svg>
        Выберите один элемент
      </Source>
    </Sources>
  </Settings>
);

const ExplorerWindow = () => (
  <Explorer $x={472} $y={0} $w={1433}>
    <Caption />
    <Ribbon>
      <RibbonTab $file>Файл</RibbonTab>
      <RibbonTab>Главная</RibbonTab>
      <RibbonTab>Поделиться</RibbonTab>
      <RibbonTab>Вид</RibbonTab>
      <Spacer />
      <IconButton $w={58} aria-label="Развернуть ленту"><Chevron d="down" w={18} c="#999" s={2} /></IconButton>
      <IconButton $w={30} $h={30} aria-label="Справка">
        <svg width="28" height="28" viewBox="0 0 28 28">
          <circle cx="14" cy="14" r="13.500" fill="#2468c8" />
          <path d="M10 11q0-4 4-4t4 3.500q0 2-2 3.500t-2 3M14 19v3" fill="none" stroke="#fff" strokeWidth="2.500" />
        </svg>
      </IconButton>
    </Ribbon>
    <NavRow>
      <IconButton $w={60} aria-label="Назад"><Arrow /></IconButton>
      <IconButton $w={60} aria-label="Вперёд"><Arrow r={180} /></IconButton>
      <IconButton $w={34} aria-label="Последние"><Chevron d="down" w={13} c="#999" /></IconButton>
      <IconButton $w={48} aria-label="Вверх"><Arrow r={90} /></IconButton>
      <AddressBar>
        <NetFolder />
        <Chevron d="right" />
        <Crumb>Сеть</Crumb>
        <Chevron d="right" />
        <Crumb>SGUPOS</Crumb>
        <Chevron d="right" />
        <Crumb>общая_организация</Crumb>
        <Spacer />
        <IconButton aria-label="Журнал"><Chevron d="down" w={20} /></IconButton>
        <RefreshCell>
          <IconButton $w={38} aria-label="Обновить">
            <svg width="22" height="24" viewBox="0 0 22 24" fill="none" stroke="#777" strokeWidth="3">
              <path d="M15 5a8.500 8.500 0 1 1-9 1M2 3h7v7" />
            </svg>
          </IconButton>
        </RefreshCell>
      </AddressBar>
      <SearchBox>
        <SearchInput aria-label="Поиск" placeholder="Поиск: общая_организация" />
        <svg width="26" height="26" viewBox="0 0 26 26" fill="none" stroke="#777" strokeWidth="3">
          <circle cx="16" cy="9" r="7" /><path d="M11 14L1 24" />
        </svg>
      </SearchBox>
    </NavRow>
    <Split>
      <Sidebar>
        <div>
          <SideItem href="#quick"><Star />Быстрый доступ</SideItem>
          {quickLinks.map((q) => (
            <SideItem key={q.name} href="#folder" $child>{q.icon}{q.name}<Spacer /><Pin /></SideItem>
          ))}
        </div>
        <SideItem href="#pc"><Monitor />Этот компьютер</SideItem>
        <SideItem href="#net" $current><Network />Сеть</SideItem>
      </Sidebar>
      <Listing>
        <FileTable>
          <colgroup><col width="513" /><col width="241" /><col width="240" /><col /></colgroup>
          <thead>
            <tr>
              <th><HeadCell $first>Имя<Chevron d="up" w={18} s={2} /></HeadCell></th>
              <th><HeadCell>Дата изменения</HeadCell></th>
              <th><HeadCell>Тип</HeadCell></th>
              <th><HeadCell>Размер</HeadCell></th>
            </tr>
          </thead>
          <tbody>
            {files.map((f) => (
              <FileRow key={f.name} $selected={f.selected}>
                <td><FileName>{f.icon}{f.name}</FileName></td>
                <td>{f.date}</td>
                <td>{f.type}</td>
                <td />
              </FileRow>
            ))}
          </tbody>
        </FileTable>
      </Listing>
    </Split>
    <ScrollTrack><IconButton $w={32} $h={32} aria-label="Вправо"><Chevron d="right" w={18} c="#505050" /></IconButton></ScrollTrack>
    <StatusRow><Picture w={28} /></StatusRow>
  </Explorer>
);

const PropertiesWindow = () => (
  <Window $x={1076} $y={251} $w={753}>
    <TitleBar>
      <Doc w={24} h={30} line="#ddd" />
      <Title>Свойства: важная информация.txt</Title>
      <IconButton aria-label="Закрыть"><Close /></IconButton>
    </TitleBar>
    <DialogBody>
      <Tabs $inset>
        <Tab>Общие</Tab>
        <Tab $active>Безопасность</Tab>
        <Tab>Подробно</Tab>
        <Tab>Предыдущие версии</Tab>
      </Tabs>
      <Panel $end={50}>
        <ObjectName><span>Имя объекта:</span><span>{"\\\\Sgupos\\общая_организация\\важная информация.txt"}</span></ObjectName>
        <Label $top={37}>Группы или пользователи:</Label>
        <Principals $h={190}>
          <Principal><Group sel /></Principal>
          <Principal><Person /></Principal>
          <Principal><Group /></Principal>
          <Principal><Group /></Principal>
          <Principal><Person /></Principal>
          <BottomScroll><IconButton $w={34} aria-label="Влево"><Chevron d="left" w={18} c="#505050" /></IconButton></BottomScroll>
        </Principals>
        <Label $top={8}>{'Чтобы изменить разрешения,\nнажмите кнопку "Изменить".'}</Label>
        <Label $top={44}>Разрешения для группы</Label>
        <RightsBox $h={247} $disabled />
        <Label $top={10}>{'Чтобы задать особые разрешения или\nпараметры, нажмите кнопку\n"Дополнительно".'}</Label>
      </Panel>
      <Buttons $top={18}>
        <PushButton>OK</PushButton>
        <PushButton>Отмена</PushButton>
      </Buttons>
    </DialogBody>
  </Window>
);

const PermissionsWindow = () => (
  <Window $x={1144} $y={399} $w={723}>
    <TitleBar>
      <Folder />
      <Title>Разрешения для группы "важная информация.txt"</Title>
      <IconButton aria-label="Закрыть"><Close /></IconButton>
    </TitleBar>
    <DialogBody>
      <Tabs><Tab $active>Безопасность</Tab></Tabs>
      <Panel $end={55}>
        <ObjectName><span>Имя объекта:</span><span>{"\\\\Sgupos\\общая_организация\\важная информ"}</span></ObjectName>
        <Label $top={36}>Группы или пользователи:</Label>
        <Principals $h={217}>
          {principals.map((p) => (
            <Principal key={p.name} $selected={p.selected}>{p.icon}<span>{p.name}</span></Principal>
          ))}
        </Principals>
        <Buttons $top={14} $end={4}>
          <PushButton>Добавить...</PushButton>
          <PushButton>Удалить</PushButton>
        </Buttons>
        <Label $top={17}>Разрешения для группы "работники"</Label>
        <RightsHead><span>Разрешить</span><span>Запретить</span></RightsHead>
        <RightsBox $h={197}>
          <RightsTable>
            <colgroup><col /><col width="120" /><col width="63" /></colgroup>
            <tbody>
              {rights.map((r) => (
                <tr key={r.name}>
                  <th scope="row">{r.name}</th>
                  <td><Check type="checkbox" aria-label={`Разрешить: ${r.name}`} defaultChecked={r.inherited} disabled={r.inherited} /></td>
                  <td><Check type="checkbox" aria-label={`Запретить: ${r.name}`} /></td>
                </tr>
              ))}
              <tr>
                <th />
                <td><Check type="checkbox" aria-label="Разрешить: особые" disabled /></td>
                <td><Check type="checkbox" aria-label="Запретить: особые" disabled /></td>
              </tr>
            </tbody>
          </RightsTable>
          <VScroll>
            <IconButton $w={30} $h={33} aria-label="Вверх"><Chevron d="up" w={18} c="#505050" /></IconButton>
            <Thumb />
            <Spacer />
            <IconButton $w={30} $h={33} aria-label="Вниз"><Chevron d="down" w={18} c="#505050" /></IconButton>
          </VScroll>
        </RightsBox>
      </Panel>
      <Buttons $top={18}>
        <PushButton>OK</PushButton>
        <PushButton>Отмена</PushButton>
        <PushButton>Применить</PushButton>
      </Buttons>
    </DialogBody>
  </Window>
);

const MessageWindow = () => (
  <Window $x={161} $y={750} $w={959} $active role="alertdialog">
    <TitleBar $active>
      <Title>Безопасность Windows</Title>
      <IconButton aria-label="Закрыть"><Close c="#fff" /></IconButton>
    </TitleBar>
    <MessageBody><Warning /><p>{message}</p></MessageBody>
    <MessageFooter><PushButton $primary>OK</PushButton></MessageFooter>
  </Window>
);

export default function App() {
  return (
    <Screen>
      <GlobalStyle />
      <Desktop>
        <IconColumn>
          {shortcuts.map((s) => (
            <Shortcut key={s.name}>{s.icon}<span>{s.name}</span></Shortcut>
          ))}
        </IconColumn>
        <SettingsWindow />
        <ExplorerWindow />
        <PropertiesWindow />
        <PermissionsWindow />
        <MessageWindow />
        <KeyHint>
          <svg width="28" height="28" viewBox="0 0 28 28" fill="none" stroke="#fff" strokeWidth="2.400" strokeLinejoin="round">
            <path d="M14 1L1 13h6v5h14v-5h6zM8 22h12v5H8z" />
          </svg>
        </KeyHint>
      </Desktop>
      <Taskbar>
        <TaskButton $w={65} $start aria-label="Пуск">
          <svg width="34" height="34" viewBox="0 0 34 34" fill="#fff"><path d="M0 5l13-2v13H0zM15 2.500L33 0v16H15zM0 18h13v13L0 29zM15 18h18v16l-18-2.500z" /></svg>
        </TaskButton>
        <TaskButton $w={101} aria-label="Представление задач">
          <svg width="42" height="30" viewBox="0 0 42 30" fill="none" stroke="#fff" strokeWidth="2"><path d="M9 1h24v28H9zM6 5H1v20h5M36 5h5v20h-5" /></svg>
        </TaskButton>
        <TaskButton $w={99} $line={80} aria-label="Проводник"><TaskFolder /></TaskButton>
        <TaskButton $w={99} $line={80} aria-label="Параметры"><GearSolid /></TaskButton>
        <TaskButton $w={97} $active $line={97} aria-label="Свойства"><Doc w={32} h={42} line="#bbb" /></TaskButton>
        <Tray>
          <TrayGroup>
            <Total360 s={33} />
            <svg width="30" height="34" viewBox="0 0 30 34">
              <path d="M14 1l13 6v17l-13 8-12-8V7z" fill="#4c6288" stroke="#c5cfdf" strokeWidth="1.500" />
              <path d="M2 7l12 6 13-6M14 13v19M7 4l13 6M8 10v17M3 15l11 7 12-7" stroke="#c5cfdf" strokeWidth="1.500" fill="none" />
              <path d="M21 17l2 5 6 0-4 4 2 6-6-3-5 3 1-6-4-4 6 0z" fill="#f7b733" />
            </svg>
            <svg width="34" height="30" viewBox="0 0 34 30" fill="none" stroke="#fff" strokeWidth="2">
              <path d="M8 2h24v18H8M1 3h8v9H1zM5 12v15M5 20h8M12 20v6M3 6l2 2 2-2" />
              <path d="M24 12l9 17H15z" fill="#f3b02f" stroke="none" /><path d="M24 18v5M24 25v2" stroke="#000" />
            </svg>
            <svg width="34" height="28" viewBox="0 0 34 28" fill="none" stroke="#fff" strokeWidth="2">
              <path d="M1 9h5l7-7v24l-7-7H1zM17 10q3 4 0 8M22 6q6 8 0 16M27 2q9 12 0 24" />
            </svg>
            ENG
          </TrayGroup>
          <Clock>20:10<br />21.07.2024</Clock>
          <svg width="34" height="34" viewBox="0 0 34 34" fill="none" stroke="#fff" strokeWidth="2.400"><path d="M1.500 2h31v24H22l-5 5-5-5H1.500z" /></svg>
        </Tray>
      </Taskbar>
      <HostBar>
        {hostIcons.map((icon, i) => (
          <svg key={i} width="30" height="30" viewBox="0 0 30 30">{icon}</svg>
        ))}
        <HostKey>Ctrl</HostKey>
      </HostBar>
    </Screen>
  );
}
